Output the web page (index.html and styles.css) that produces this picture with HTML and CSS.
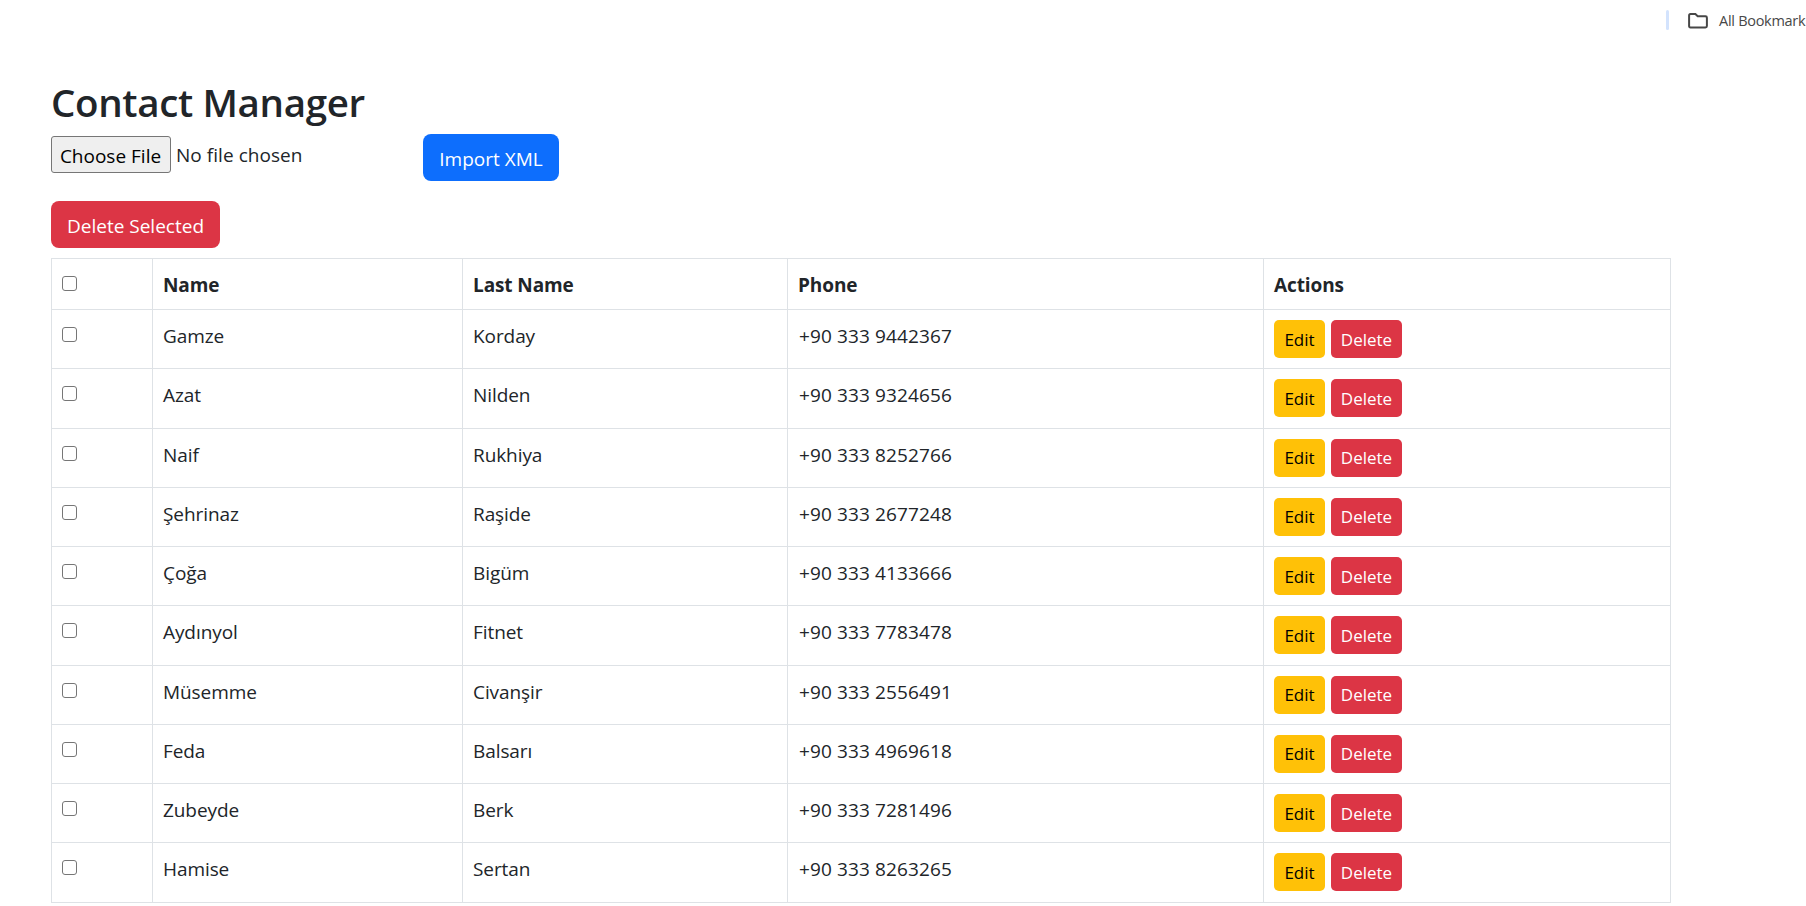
FILE: index.html
```html
<!DOCTYPE html>
<html lang="en">
<head>
<meta charset="utf-8">
<title>Contact Manager</title>
<link rel="stylesheet" href="styles.css">
</head>
<body>
<header class="bookmarks">
  <span class="divider"></span>
  <svg class="folder" viewBox="0 0 20 16"><path d="M2.4 1.1H7.4L9.7 3.3H17.5Q18.9 3.3 18.9 4.7V13.1Q18.9 14.5 17.5 14.5H2.4Q1.1 14.5 1.1 13.1V2.5Q1.1 1.1 2.4 1.1Z"/></svg>
  <span class="bookmarks-label">All Bookmark</span>
</header>
<main class="container">
  <h1 class="title">Contact Manager</h1>
  <form class="import">
    <button type="button" class="choose">Choose File</button>
    <span class="file-name">No file chosen</span>
    <button type="button" class="btn btn-primary">Import XML</button>
  </form>
  <button type="button" class="btn btn-danger">Delete Selected</button>
  <div class="table" id="contacts">
    <div class="row head">
      <div class="cell"><span class="check"></span></div>
      <div class="cell">Name</div>
      <div class="cell">Last Name</div>
      <div class="cell">Phone</div>
      <div class="cell">Actions</div>
    </div>
  </div>
</main>
<script src="contacts.js"></script>
</body>
</html>
```
FILE: contacts.js
```js
const contacts = [
  ["Gamze", "Korday", "+90 333 9442367"],
  ["Azat", "Nilden", "+90 333 9324656"],
  ["Naif", "Rukhiya", "+90 333 8252766"],
  ["Şehrinaz", "Raşide", "+90 333 2677248"],
  ["Çoğa", "Bigüm", "+90 333 4133666"],
  ["Aydınyol", "Fitnet", "+90 333 7783478"],
  ["Müsemme", "Civanşir", "+90 333 2556491"],
  ["Feda", "Balsarı", "+90 333 4969618"],
  ["Zubeyde", "Berk", "+90 333 7281496"],
  ["Hamise", "Sertan", "+90 333 8263265"]
];
const table = document.getElementById("contacts");
for (const [name, last, phone] of contacts) {
  table.insertAdjacentHTML("beforeend", `<div class="row">
    <div class="cell"><span class="check"></span></div>
    <div class="cell">${name}</div>
    <div class="cell">${last}</div>
    <div class="cell phone">${phone}</div>
    <div class="cell actions"><button class="btn-sm edit">Edit</button><button class="btn-sm delete">Delete</button></div>
  </div>`);
}
```
FILE: styles.css
```css
* { box-sizing: border-box; }
body {
  margin: 0;
  height: 906px;
  overflow: hidden;
  background: #fff;
  color: #212529;
  font-family: "Open Sans", "Noto Sans", sans-serif;
  font-size: 19px;
  line-height: 30px;
}
button { font: inherit; border: 0; margin: 0; white-space: nowrap; display: block; }
.bookmarks {
  height: 76px;
  padding: 10px 0 0 1666px;
  display: flex;
  align-items: flex-start;
}
.divider { flex: none; width: 3px; height: 20px; border-radius: 2px; background: #d3e3fd; }
.folder { flex: none; width: 20px; height: 16px; margin: 3px 11px 0 19px; fill: none; stroke: #474747; stroke-width: 2; }
.bookmarks-label { flex: none; font-size: 14.5px; line-height: 22px; letter-spacing: -0.28px; color: #474747; white-space: nowrap; }
.container { width: 1620px; margin-left: 51px; }
.title { margin: 0; height: 58px; font-size: 38.5px; line-height: 52px; font-weight: 600; letter-spacing: -0.35px; white-space: nowrap; }
.import { display: flex; height: 67px; align-items: flex-start; }
.choose {
  width: 120px;
  height: 37px;
  margin: 2px 5px 0 0;
  padding: 2px 1px 0 0;
  border: 1px solid #767676;
  border-radius: 3px;
  background: #efefef;
  color: #000;
}
.file-name { width: 247px; padding-top: 6px; letter-spacing: 0.05px; }
.btn { height: 47px; padding: 2px 0 0; border-radius: 8px; color: #fff; }
.btn-primary { width: 136px; background: #0d6efd; }
.btn-danger { width: 169px; background: #dc3545; }
.table { margin-top: 10px; border-top: 1px solid #dee2e6; border-left: 1px solid #dee2e6; }
.row { display: grid; grid-template-columns: 101px 310px 325px 476px 407px; height: 59.25px; letter-spacing: -0.08px; }
.head { height: 51px; font-weight: 700; letter-spacing: -0.1px; }
.cell { border-right: 1px solid #dee2e6; border-bottom: 1px solid #dee2e6; padding: 11px 0 0 10px; white-space: nowrap; }
.phone { padding-left: 11px; letter-spacing: 0.12px; }
.check { display: block; width: 15px; height: 15px; margin-top: 6px; border: 1px solid #767676; border-radius: 3px; background: #fff; }
.actions { display: flex; gap: 6px; padding-top: 10px; }
.btn-sm { height: 38px; padding: 1px 0 0; border-radius: 5px; font-size: 17px; }
.edit { width: 51px; background: #ffc107; color: #000; }
.delete { width: 71px; background: #dc3545; color: #fff; }
```
